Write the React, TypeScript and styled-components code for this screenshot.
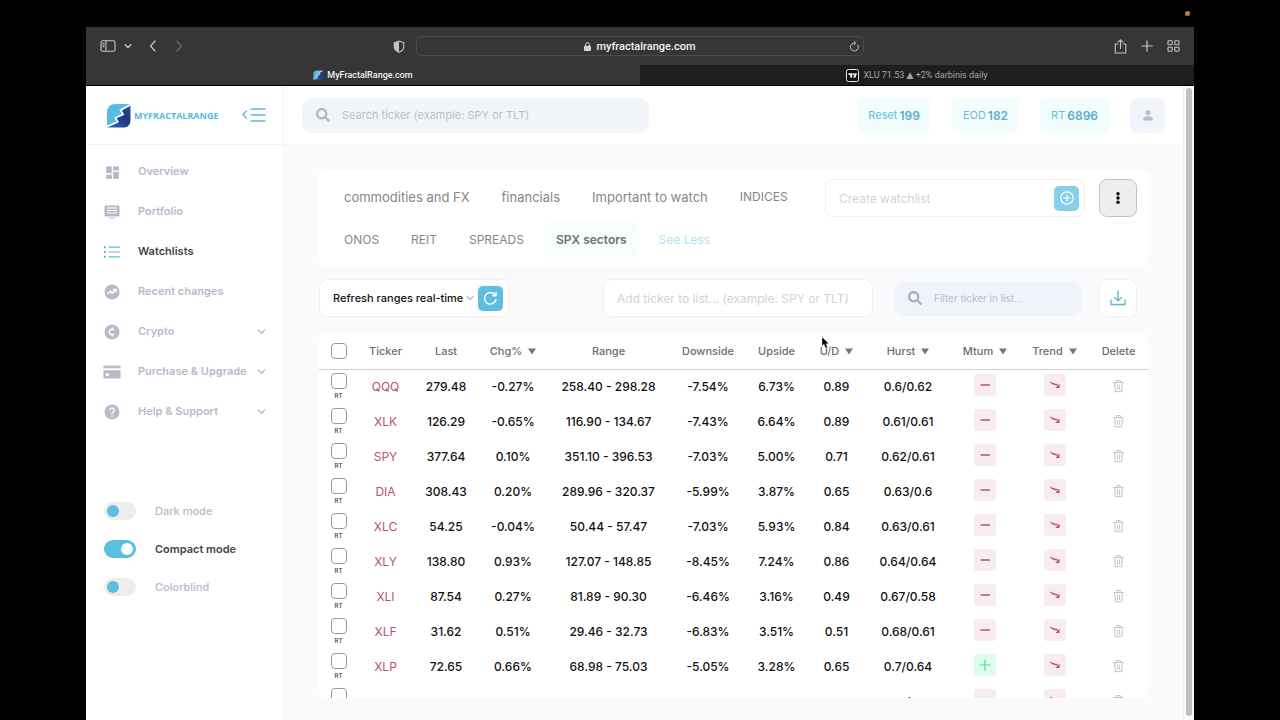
import React from "react";
import styled, { createGlobalStyle } from "styled-components";
import { MdDashboard } from "react-icons/md";
import { FaSearch } from "react-icons/fa";

const cyan = "#5bbfe0";
const muted = "#b9b9ca";

const GlobalStyle = createGlobalStyle`
  *, *::before, *::after { box-sizing: border-box; }
  body { margin: 0; background: #000; }
  body, button, input, select { font-family: Inter, "Liberation Sans", sans-serif; }
  button { padding: 0; border: 0; background: none; cursor: pointer; }
  a { color: inherit; text-decoration: none; }
  svg { display: block; flex: none; }
`;

const Screen = styled.div`
  position: relative;
  display: flex;
  flex-direction: column;
  height: 100vh;
  padding: 27px 86px 0;
  overflow: hidden;
`;

const RecordingDot = styled.span`
  position: absolute;
  top: 11px;
  right: 90px;
  width: 5px;
  height: 5px;
  border-radius: 50%;
  background: #c07a35;
`;

const Cursor = styled.svg`
  position: absolute;
  left: 821px;
  top: 336px;
`;

/* Browser chrome */

const Toolbar = styled.div`
  display: grid;
  grid-template-columns: 1fr minmax(200px, 448px) 1fr;
  align-items: center;
  gap: 11px;
  height: 38px;
  flex: none;
  padding: 0 14px;
  background: #363636;
  color: #c4c4c4;
`;

const ToolGroup = styled.div<{ $end?: boolean }>`
  display: flex;
  align-items: center;
  justify-content: ${(p) => (p.$end ? "flex-end" : "flex-start")};
  gap: ${(p) => (p.$end ? "14px" : "8px")};
`;

const ToolButton = styled.button<{ $dim?: boolean; $push?: boolean }>`
  display: flex;
  color: ${(p) => (p.$dim ? "#696969" : "#c4c4c4")};
  margin-left: ${(p) => (p.$push ? "auto" : "0")};
`;

const NavPair = styled.div`
  display: flex;
  gap: 14px;
  margin-left: 7px;
`;

const AddressBar = styled.div`
  display: grid;
  grid-template-columns: 11px 1fr 11px;
  align-items: center;
  height: 20px;
  padding: 0 3px;
  border: 1px solid #4b4b4b;
  border-radius: 5px;
`;

const Address = styled.span`
  grid-column: 2;
  display: flex;
  align-items: center;
  justify-content: center;
  gap: 5px;
  color: #f2f2f2;
  font-family: Roboto, sans-serif;
  font-size: 11px;
  font-weight: 500;
`;

const TabStrip = styled.div`
  display: flex;
  flex: none;
  height: 21px;
  border-bottom: 1px solid #000;
`;

const Tab = styled.button<{ $active?: boolean }>`
  display: flex;
  flex: 1;
  align-items: center;
  justify-content: center;
  gap: 4px;
  background: ${(p) => (p.$active ? "#363636" : "#1e1e1e")};
  color: ${(p) => (p.$active ? "#f0f0f0" : "#a5a5a5")};
  font-family: Roboto, "DejaVu Sans", sans-serif;
  font-size: 9px;
  font-weight: ${(p) => (p.$active ? 500 : 400)};
`;

/* Site */

const Site = styled.div`
  display: flex;
  flex: 1;
  min-height: 0;
  background: #fff;
`;

const Sidebar = styled.aside`
  display: flex;
  flex-direction: column;
  flex: none;
  width: 198px;
  border-right: 1px solid #f3f3f7;
`;

const Brand = styled.div`
  display: flex;
  align-items: center;
  height: 59px;
  padding: 0 17px 0 20px;
  border-bottom: 1px solid #f3f3f5;
`;

const BrandLink = styled.a`
  display: flex;
  align-items: center;
  gap: 3px;
  margin-right: auto;
  color: #57b9dc;
  font-family: "Open Sans", sans-serif;
  font-size: 9px;
  font-weight: 700;
`;

const Nav = styled.nav`
  display: flex;
  flex-direction: column;
  padding-top: 6px;
`;

const NavLink = styled.a<{ $active?: boolean }>`
  display: grid;
  grid-template-columns: 18px 1fr 9px;
  align-items: center;
  column-gap: 17px;
  height: 40px;
  padding: 0 17px;
  color: ${(p) => (p.$active ? "#444" : muted)};
  font-size: 11px;
  font-weight: 600;
  white-space: nowrap;
`;

const NavIcon = styled.span<{ $active?: boolean }>`
  display: flex;
  justify-content: center;
  padding-top: 2px;
  color: ${(p) => (p.$active ? "#63bcd2" : muted)};
`;

const NavText = styled.span`
  width: 0;
`;

const Toggles = styled.div`
  display: flex;
  flex-direction: column;
  margin-top: 61px;
`;

const ToggleRow = styled.label<{ $on?: boolean }>`
  display: flex;
  align-items: center;
  gap: 19px;
  height: 38px;
  padding-left: 18px;
  color: ${(p) => (p.$on ? "#444" : muted)};
  font-size: 11px;
  font-weight: ${(p) => (p.$on ? 600 : 500)};
`;

const Switch = styled.input`
  appearance: none;
  display: flex;
  align-items: center;
  width: 32px;
  height: 18px;
  margin: 0;
  padding: 0 3px;
  border-radius: 9px;
  background: #ededee;
  &::before {
    content: "";
    width: 12px;
    height: 12px;
    border-radius: 50%;
    background: ${cyan};
  }
  &:checked { background: ${cyan}; justify-content: flex-end; }
  &:checked::before { background: #fff; }
`;

const Content = styled.div`
  display: flex;
  flex-direction: column;
  flex: 1;
  min-width: 0;
`;

const Header = styled.header`
  display: flex;
  align-items: center;
  flex: none;
  height: 59px;
  padding: 0 18px;
  border-bottom: 1px solid #f5f5f7;
`;

const SearchBox = styled.label<{ $wide?: boolean }>`
  display: flex;
  align-items: center;
  gap: 12px;
  width: ${(p) => (p.$wide ? "347px" : "188px")};
  height: 35px;
  padding: 0 14px;
  border-radius: 10px;
  background: ${(p) => (p.$wide ? "#f1f5fa" : "#eff4fa")};
  color: ${(p) => (p.$wide ? "#b4b8be" : "#a9afbf")};
`;

const TextInput = styled.input<{ $size: number; $tone: string }>`
  flex: 1;
  min-width: 0;
  padding: 0;
  border: 0;
  outline: 0;
  background: none;
  font-size: ${(p) => p.$size}px;
  &::placeholder { color: ${(p) => p.$tone}; opacity: 1; }
`;

const Credits = styled.div`
  display: flex;
  gap: 21px;
  margin-left: auto;
`;

const Credit = styled.button`
  display: flex;
  align-items: center;
  gap: 2px;
  height: 35px;
  padding: 0 11px;
  border-radius: 6px;
  background: #f3fdfe;
  color: #68bdd3;
  font-size: 11px;
  white-space: nowrap;
  strong { font-size: 12px; font-weight: 600; color: #5aafc9; }
`;

const UserButton = styled.button`
  display: flex;
  align-items: center;
  justify-content: center;
  width: 35px;
  height: 35px;
  border-radius: 8px;
  background: #f1f4fa;
  color: #b9bcc2;
`;

const Main = styled.main`
  display: flex;
  flex-direction: column;
  flex: 1;
  min-height: 0;
  padding: 25px 35px 22px;
  background: #fafafd;
`;

const WatchPanel = styled.section`
  display: flex;
  align-items: flex-start;
  gap: 14px;
  padding: 9px 11px 10px 13px;
  background: #fff;
  border-radius: 6px;
`;

const ChipList = styled.div`
  display: flex;
  flex-wrap: wrap;
  flex: 1;
  gap: 8px;
`;

const Chip = styled.button<{ $active?: boolean; $link?: boolean; $small?: boolean }>`
  height: 35px;
  padding: 0 12px;
  border-radius: 6px;
  background: ${(p) => (p.$active ? "#f7fdfd" : "#fff")};
  color: ${(p) => (p.$link ? "#b3e2ee" : p.$active ? "#707070" : "#868686")};
  font-size: ${(p) => (p.$small ? "12px" : "13px")};
  font-weight: ${(p) => (p.$active ? 600 : 400)};
  white-space: nowrap;
`;

const Field = styled.div<{ $width: number }>`
  display: flex;
  align-items: center;
  width: ${(p) => p.$width}px;
  height: 38px;
  padding: 0 5px 0 13px;
  border: 1px solid #f0f0f3;
  border-radius: 8px;
  background: #fff;
`;

const SquareAction = styled.button<{ $soft?: boolean }>`
  display: flex;
  align-items: center;
  justify-content: center;
  flex: none;
  width: 25px;
  height: 25px;
  border-radius: 5px;
  background: ${(p) => (p.$soft ? "#87cfe9" : cyan)};
  color: #fff;
`;

const IconTile = styled.button<{ $grey?: boolean }>`
  display: flex;
  align-items: center;
  justify-content: center;
  flex: none;
  width: 38px;
  height: 38px;
  border: 1px solid ${(p) => (p.$grey ? "#c4c4c4" : "#f0f0f3")};
  border-radius: 8px;
  background: ${(p) => (p.$grey ? "#eee" : "#fff")};
  color: ${(p) => (p.$grey ? "#000" : "#5cb6d2")};
`;

const Controls = styled.div`
  display: flex;
  align-items: center;
  justify-content: flex-end;
  gap: 21px;
  flex: none;
  margin: 12px 0 16px;
  padding-right: 11px;
`;

const Refresh = styled(Field)`
  margin-right: auto;
`;

const ListTools = styled.div`
  display: flex;
  align-items: center;
  gap: 17px;
`;

const SelectWrap = styled.label`
  display: flex;
  align-items: center;
  flex: 1;
  padding-right: 4px;
  color: #b5b5b5;
`;

const Select = styled.select`
  appearance: none;
  flex: 1;
  min-width: 0;
  padding: 0;
  border: 0;
  background: none;
  color: #111;
  font-size: 11px;
  font-weight: 500;
`;

const TablePanel = styled.section`
  flex: 1;
  min-height: 0;
  overflow: hidden;
  background: #fff;
  border-radius: 6px;
`;

const Table = styled.table`
  width: 100%;
  table-layout: fixed;
  border-collapse: collapse;
  color: #111;
  font-size: 12px;
  font-weight: 500;
  text-align: center;
`;

const HeadCell = styled.th`
  height: 36px;
  padding: 0;
  border-bottom: 1px solid #cfcfcf;
  color: #6d6d6d;
  font-size: 11px;
  font-weight: 500;
  white-space: nowrap;
`;

const HeadLabel = styled.span`
  display: inline-flex;
  align-items: center;
  gap: 6px;
`;

const Cell = styled.td`
  height: 35px;
  padding: 0;
  white-space: nowrap;
`;

const Ticker = styled.a`
  color: #b15470;
  font-weight: 400;
`;

const Pick = styled.div`
  display: flex;
  flex-direction: column;
  align-items: center;
  gap: 3px;
  height: 27px;
  color: #333;
  font-size: 6px;
  line-height: 8px;
`;

const Tick = styled.input`
  appearance: none;
  display: block;
  width: 16px;
  height: 16px;
  margin: 0 auto;
  border: 1px solid #999;
  border-radius: 4px;
  background: #fff;
`;

const Badge = styled.span<{ $up?: boolean }>`
  display: flex;
  align-items: center;
  justify-content: center;
  width: 22px;
  height: 22px;
  margin: 0 auto 4px;
  border-radius: 3px;
  background: ${(p) => (p.$up ? "#ddfcee" : "#f9ecf0")};
  color: ${(p) => (p.$up ? "#68cda0" : "#b8506c")};
`;

const DeleteButton = styled.button`
  display: inline-flex;
  margin-bottom: 2px;
  vertical-align: middle;
  color: #c3c3c3;
`;

const ScrollTrack = styled.div`
  flex: none;
  width: 11px;
  padding: 2px 2px 4px;
  border-left: 1px solid #ededed;
  background: #fafafa;
`;

const ScrollThumb = styled.div`
  height: 100%;
  border-radius: 3px;
  background: #c1c1c1;
`;

const line = { fill: "none", stroke: "currentColor", strokeLinecap: "round", strokeLinejoin: "round" } as const;

const Chevron = ({ size = 9, width = 1.4 }: { size?: number; width?: number }) => (
  <svg width={size} height={size} viewBox="0 0 9 9" {...line} strokeWidth={width}><path d="M1.3 3 4.5 6.2 7.7 3" /></svg>
);

const LogoMark = ({ size }: { size: number }) => (
  <svg width={size} height={size} viewBox="0 0 24 24">
    <defs>
      <linearGradient id="markDark" x1="0" y1="1" x2="1" y2="0">
        <stop offset="0" stopColor="#2f6fbc" /><stop offset=".6" stopColor="#1f3580" /><stop offset="1" stopColor="#2a4f9c" />
      </linearGradient>
    </defs>
    <path d="M1 22V9C1 4 4 1 9 1h14l-9 6 2 4-7 3 2 4z" fill="#55bfe3" />
    <path d="M23.500 2v14c0 5-2.500 7.500-7 7.500H1l10-5-1-4 7-3-2-4z" fill="url(#markDark)" />
    <path d="M23 2 14 6.800l2.500 4.200-7.500 3 2.300 4.200L1 22.500" fill="none" stroke="#fff" strokeWidth="1.600" />
  </svg>
);

const SortMark = () => (
  <svg width="8" height="9" viewBox="0 0 8 9"><path d="M0 2.500h8L4 8.500z" fill="#777" /></svg>
);

const Trash = () => (
  <svg width="11" height="14" viewBox="0 0 11 14" {...line} strokeWidth="1">
    <path d="M.8 3.500h9.400M3.700 3.300V1.500h3.600v1.800M1.700 3.700l.5 9h6.600l.5-9M4.400 6v4.500M6.600 6v4.500" />
  </svg>
);

const MinusMark = () => (
  <svg width="10" height="10" viewBox="0 0 10 10" {...line} strokeWidth="1.300"><path d="M1 5h8.500" /></svg>
);

const PlusMark = ({ size = 12 }: { size?: number }) => (
  <svg width={size} height={size} viewBox="0 0 12 12" {...line} strokeWidth="1.200"><path d="M6 .8v10.400M.8 6h10.400" /></svg>
);

const DownTrend = () => (
  <svg width="10" height="8" viewBox="0 0 10 8" {...line} strokeWidth="1.200">
    <path d="M.8 1.200 2.800 3.200l1-.9 1.400 1.500 1-.7L8.500 6M9 3.500V6.300H6.300" />
  </svg>
);

const navIcons = {
  overview: <MdDashboard size={17} />,
  portfolio: (
    <svg width="16" height="14" viewBox="0 0 16 14">
      <path fill="currentColor" fillRule="evenodd" d="M1.500.5h13a1 1 0 0 1 1 1v9a1 1 0 0 1-1 1h-13a1 1 0 0 1-1-1v-9a1 1 0 0 1 1-1zM3 2.600v1h10v-1zM3 5v1h10V5zM3 7.400v1h10v-1zM5 12.500h6v1H5z" />
    </svg>
  ),
  list: (
    <svg width="16" height="12" viewBox="0 0 16 12" fill="currentColor">
      <path d="M0 .2h2v2H0zM4.500.6H16v1.200H4.500zM0 5h2v2H0zM4.500 5.400H16v1.200H4.500zM0 9.800h2v2H0zM4.500 10.200H16v1.200H4.500z" />
    </svg>
  ),
  recent: (
    <svg width="16" height="16" viewBox="0 0 16 16">
      <circle cx="8" cy="8" r="7.500" fill="currentColor" />
      <path d="M3.500 10 6.200 7.300l2 1.800 3.400-3.300M9 5.500h3v2.800" fill="none" stroke="#fff" strokeWidth="1.500" />
    </svg>
  ),
  crypto: (
    <svg width="16" height="16" viewBox="0 0 16 16">
      <circle cx="8" cy="8" r="7.500" fill="currentColor" />
      <path d="M10.300 6.300A2.800 2.800 0 1 0 10.300 9.700M8.300 3.500v1.700M8.300 10.800v1.700" fill="none" stroke="#fff" strokeWidth="1.500" />
    </svg>
  ),
  card: (
    <svg width="18" height="14" viewBox="0 0 18 14">
      <path fill="currentColor" fillRule="evenodd" d="M2 .5h14a1.600 1.600 0 0 1 1.600 1.600V3.300H.4V2.100A1.600 1.600 0 0 1 2 .5zM.4 5.300h17.200v6.600A1.600 1.600 0 0 1 16 13.500H2A1.600 1.600 0 0 1 .4 11.900zM2.500 8.300v2.700h3.500V8.300z" />
    </svg>
  ),
  help: (
    <svg width="16" height="16" viewBox="0 0 16 16">
      <circle cx="8" cy="8" r="7.500" fill="currentColor" />
      <path d="M5.800 6.300a2.200 2.200 0 1 1 3.300 1.900C8.300 8.700 8 9 8 9.800M8 11.300v1.500" fill="none" stroke="#fff" strokeWidth="1.500" />
    </svg>
  ),
};

const navItems: { icon: keyof typeof navIcons; label: string; menu?: boolean; active?: boolean }[] = [
  { icon: "overview", label: "Overview" },
  { icon: "portfolio", label: "Portfolio" },
  { icon: "list", label: "Watchlists", active: true },
  { icon: "recent", label: "Recent changes" },
  { icon: "crypto", label: "Crypto", menu: true },
  { icon: "card", label: "Purchase & Upgrade", menu: true },
  { icon: "help", label: "Help & Support", menu: true },
];

const toggles = [
  { label: "Dark mode", on: false },
  { label: "Compact mode", on: true },
  { label: "Colorblind", on: false },
];

const lists: { name: string; small?: boolean }[] = [
  { name: "commodities and FX" },
  { name: "financials" },
  { name: "Important to watch" },
  { name: "INDICES", small: true },
  { name: "ONOS", small: true },
  { name: "REIT", small: true },
  { name: "SPREADS", small: true },
  { name: "SPX sectors", small: true },
];

const columns: { label: string; width: number; sort?: boolean }[] = [
  { label: "", width: 39 },
  { label: "Ticker", width: 55 },
  { label: "Last", width: 66 },
  { label: "Chg%", width: 68, sort: true },
  { label: "Range", width: 123 },
  { label: "Downside", width: 76 },
  { label: "Upside", width: 61 },
  { label: "U/D", width: 59, sort: true },
  { label: "Hurst", width: 84, sort: true },
  { label: "Mtum", width: 70, sort: true },
  { label: "Trend", width: 69, sort: true },
  { label: "Delete", width: 59 },
];

const rows: string[][] = [
  ["QQQ", "279.48", "-0.27%", "258.40 - 298.28", "-7.54%", "6.73%", "0.89", "0.6/0.62"],
  ["XLK", "126.29", "-0.65%", "116.90 - 134.67", "-7.43%", "6.64%", "0.89", "0.61/0.61"],
  ["SPY", "377.64", "0.10%", "351.10 - 396.53", "-7.03%", "5.00%", "0.71", "0.62/0.61"],
  ["DIA", "308.43", "0.20%", "289.96 - 320.37", "-5.99%", "3.87%", "0.65", "0.63/0.6"],
  ["XLC", "54.25", "-0.04%", "50.44 - 57.47", "-7.03%", "5.93%", "0.84", "0.63/0.61"],
  ["XLY", "138.80", "0.93%", "127.07 - 148.85", "-8.45%", "7.24%", "0.86", "0.64/0.64"],
  ["XLI", "87.54", "0.27%", "81.89 - 90.30", "-6.46%", "3.16%", "0.49", "0.67/0.58"],
  ["XLF", "31.62", "0.51%", "29.46 - 32.73", "-6.83%", "3.51%", "0.51", "0.68/0.61"],
  ["XLP", "72.65", "0.66%", "68.98 - 75.03", "-5.05%", "3.28%", "0.65", "0.7/0.64"],
  ["", "", "", "", "", "", "", "/"],
];

const rising = new Set(["XLP"]);

function BrowserChrome() {
  return (
    <>
      <Toolbar>
        <ToolGroup>
          <ToolButton aria-label="Show sidebar">
            <svg width="16" height="12" viewBox="0 0 16 12" {...line} strokeWidth="1.100">
              <rect x="1" y=".8" width="14" height="10.400" rx="1.800" /><path d="M6 1v10M2.800 3.200h1.400M2.800 5h1.400M2.800 6.800h1.400" />
            </svg>
          </ToolButton>
          <ToolButton aria-label="Tab groups"><Chevron size={8} width={1.600} /></ToolButton>
          <NavPair>
            <ToolButton aria-label="Back">
              <svg width="12" height="12" viewBox="0 0 12 12" {...line} strokeWidth="1.300"><path d="M8 1 3.500 6 8 11" /></svg>
            </ToolButton>
            <ToolButton $dim aria-label="Forward">
              <svg width="12" height="12" viewBox="0 0 12 12" {...line} strokeWidth="1.300"><path d="M4 1l4.500 5L4 11" /></svg>
            </ToolButton>
          </NavPair>
          <ToolButton $push aria-label="Privacy report">
            <svg width="12" height="13" viewBox="0 0 12 13">
              <path d="M6 1 10.800 2.700v4C10.800 9.500 8.800 11 6 12.200 3.200 11 1.200 9.500 1.200 6.700v-4z" {...line} strokeWidth="1.100" />
              <path d="M6 1v11.200C3.200 11 1.200 9.500 1.200 6.700v-4z" fill="currentColor" />
            </svg>
          </ToolButton>
        </ToolGroup>
        <AddressBar>
          <Address>
            <svg width="7" height="9" viewBox="0 0 7 9">
              <rect y="3.800" width="7" height="5.200" rx="1" fill="#d0d0d0" /><path d="M1.600 4V2.500a1.900 1.900 0 0 1 3.800 0V4" fill="none" stroke="#d0d0d0" />
            </svg>
            myfractalrange.com
          </Address>
          <ToolButton aria-label="Reload">
            <svg width="11" height="11" viewBox="0 0 11 11" {...line} strokeWidth="1">
              <path d="M9 4.200A4 4 0 1 1 5.500 2M5 .5 6.800 2 5 3.700" />
            </svg>
          </ToolButton>
        </AddressBar>
        <ToolGroup $end>
          <ToolButton aria-label="Share">
            <svg width="13" height="15" viewBox="0 0 13 15" {...line} strokeWidth="1.100">
              <path d="M4 5H1.200v9h10.600V5H9M6.500 9.500V1M4 3.200 6.500.8 9 3.200" />
            </svg>
          </ToolButton>
          <ToolButton aria-label="New tab"><PlusMark /></ToolButton>
          <ToolButton aria-label="Tab overview">
            <svg width="13" height="12" viewBox="0 0 13 12" {...line} strokeWidth="1.100">
              <rect x="1" y=".8" width="4.200" height="4" rx=".6" /><rect x="7.800" y=".8" width="4.200" height="4" rx=".6" />
              <rect x="1" y="7.200" width="4.200" height="4" rx=".6" /><rect x="7.800" y="7.200" width="4.200" height="4" rx=".6" />
            </svg>
          </ToolButton>
        </ToolGroup>
      </Toolbar>
      <TabStrip>
        <Tab $active><LogoMark size={10} />MyFractalRange.com</Tab>
        <Tab>
          <svg width="13" height="13" viewBox="0 0 13 13">
            <rect x=".5" y=".5" width="12" height="12" rx="2" fill="#111" stroke="#e8e8e8" />
            <path d="M2.500 4.300h3.700v4.500H4.400V6H2.500zM8.800 4.300h2.200L9.300 8.800H7.300z" fill="#fff" /><circle cx="7.400" cy="5.200" r=".9" fill="#fff" />
          </svg>
          XLU 71.53 ▲ +2% darbinis daily
        </Tab>
      </TabStrip>
    </>
  );
}

export default function App() {
  return (
    <Screen>
      <GlobalStyle />
      <RecordingDot />
      <BrowserChrome />
      <Site>
        <Sidebar>
          <Brand>
            <BrandLink href="#"><LogoMark size={25} />MYFRACTALRANGE</BrandLink>
            <ToolButton aria-label="Collapse menu">
              <svg width="24" height="16" viewBox="0 0 24 16" {...line} stroke="#5bb9da" strokeWidth="1.300">
                <path d="M4.300 4 1 7.500 4.300 11M9 2h14M9 8h14M9 14h14" />
              </svg>
            </ToolButton>
          </Brand>
          <Nav>
            {navItems.map((item) => (
              <NavLink key={item.label} href="#" $active={item.active}>
                <NavIcon $active={item.active}>{navIcons[item.icon]}</NavIcon>
                <NavText>{item.label}</NavText>
                {item.menu && <Chevron />}
              </NavLink>
            ))}
          </Nav>
          <Toggles>
            {toggles.map((t) => (
              <ToggleRow key={t.label} $on={t.on}>
                <Switch type="checkbox" role="switch" defaultChecked={t.on} />
                {t.label}
              </ToggleRow>
            ))}
          </Toggles>
        </Sidebar>
        <Content>
          <Header>
            <SearchBox $wide>
              <FaSearch size={14} />
              <TextInput $size={11} $tone="#bcc0c6" aria-label="Search ticker" placeholder="Search ticker (example: SPY or TLT)" />
            </SearchBox>
            <Credits>
              <Credit>Reset <strong>199</strong></Credit>
              <Credit>EOD <strong>182</strong></Credit>
              <Credit>RT <strong>6896</strong></Credit>
              <UserButton aria-label="Account">
                <svg width="10" height="11" viewBox="0 0 10 11" fill="currentColor">
                  <circle cx="5" cy="2.800" r="2.500" /><path d="M.3 10.500V9c0-1.800 1.500-2.700 4.700-2.700S9.700 7.200 9.700 9v1.500z" />
                </svg>
              </UserButton>
            </Credits>
          </Header>
          <Main>
            <WatchPanel>
              <ChipList>
                {lists.map(({ name, small }) => (
                  <Chip key={name} $small={small} $active={name === "SPX sectors"}>{name}</Chip>
                ))}
                <Chip $small $link>See Less</Chip>
              </ChipList>
              <Field $width={260}>
                <TextInput $size={12} $tone="#d3d3d6" aria-label="Create watchlist" placeholder="Create watchlist" />
                <SquareAction $soft aria-label="Create">
                  <svg width="14" height="14" viewBox="0 0 14 14" {...line} strokeWidth="1.200"><circle cx="7" cy="7" r="6.200" /><path d="M7 4v6M4 7h6" /></svg>
                </SquareAction>
              </Field>
              <IconTile $grey aria-label="More">
                <svg width="4" height="12" viewBox="0 0 4 12" fill="currentColor"><circle cx="2" cy="1.700" r="1.700" /><circle cx="2" cy="6" r="1.700" /><circle cx="2" cy="10.300" r="1.700" /></svg>
              </IconTile>
            </WatchPanel>
            <Controls>
              <Refresh $width={190}>
                <SelectWrap>
                  <Select aria-label="Refresh mode"><option>Refresh ranges real-time</option></Select>
                  <Chevron size={8} />
                </SelectWrap>
                <SquareAction aria-label="Refresh">
                  <svg width="15" height="15" viewBox="0 0 15 15" {...line} strokeWidth="1.400">
                    <path d="M13 8.500A5.800 5.800 0 1 1 11.700 3.500M13 1.200v3.600H9.500" />
                  </svg>
                </SquareAction>
              </Refresh>
              <Field $width={270}>
                <TextInput $size={12} $tone="#d3d3d6" aria-label="Add ticker" placeholder="Add ticker to list... (example: SPY or TLT)" />
              </Field>
              <ListTools>
                <SearchBox>
                  <FaSearch size={14} />
                  <TextInput $size={10} $tone="#b9bec8" aria-label="Filter ticker" placeholder="Filter ticker in list..." />
                </SearchBox>
                <IconTile aria-label="Download">
                  <svg width="16" height="16" viewBox="0 0 16 16" {...line} strokeWidth="1.300">
                    <path d="M8 1v9.500M4.800 7.500 8 10.700l3.200-3.200M1 10v4.500h14V10" />
                  </svg>
                </IconTile>
              </ListTools>
            </Controls>
            <TablePanel>
              <Table>
                <colgroup>{columns.map((c, i) => <col key={i} width={c.width} />)}</colgroup>
                <thead>
                  <tr>
                    {columns.map((c, i) => (
                      <HeadCell key={i} scope="col">
                        {i === 0 ? <Tick type="checkbox" aria-label="Select all" /> : <HeadLabel>{c.label}{c.sort && <SortMark />}</HeadLabel>}
                      </HeadCell>
                    ))}
                  </tr>
                </thead>
                <tbody>
                  {rows.map(([ticker, ...values], r) => (
                    <tr key={r}>
                      <Cell><Pick><Tick type="checkbox" aria-label={`Select ${ticker}`} />{ticker && "RT"}</Pick></Cell>
                      <Cell><Ticker href="#">{ticker}</Ticker></Cell>
                      {values.map((v, i) => <Cell key={i}>{v}</Cell>)}
                      <Cell><Badge $up={rising.has(ticker)}>{rising.has(ticker) ? <PlusMark /> : <MinusMark />}</Badge></Cell>
                      <Cell><Badge><DownTrend /></Badge></Cell>
                      <Cell><DeleteButton aria-label={`Delete ${ticker}`}><Trash /></DeleteButton></Cell>
                    </tr>
                  ))}
                </tbody>
              </Table>
            </TablePanel>
          </Main>
        </Content>
        <ScrollTrack><ScrollThumb /></ScrollTrack>
      </Site>
      <Cursor width="9" height="13" viewBox="0 0 9 13"><path d="M1 1v9l2-1.800L4.500 12l2-.8L5 7.700h3z" fill="#000" stroke="#fff" strokeWidth=".4" /></Cursor>
    </Screen>
  );
}
